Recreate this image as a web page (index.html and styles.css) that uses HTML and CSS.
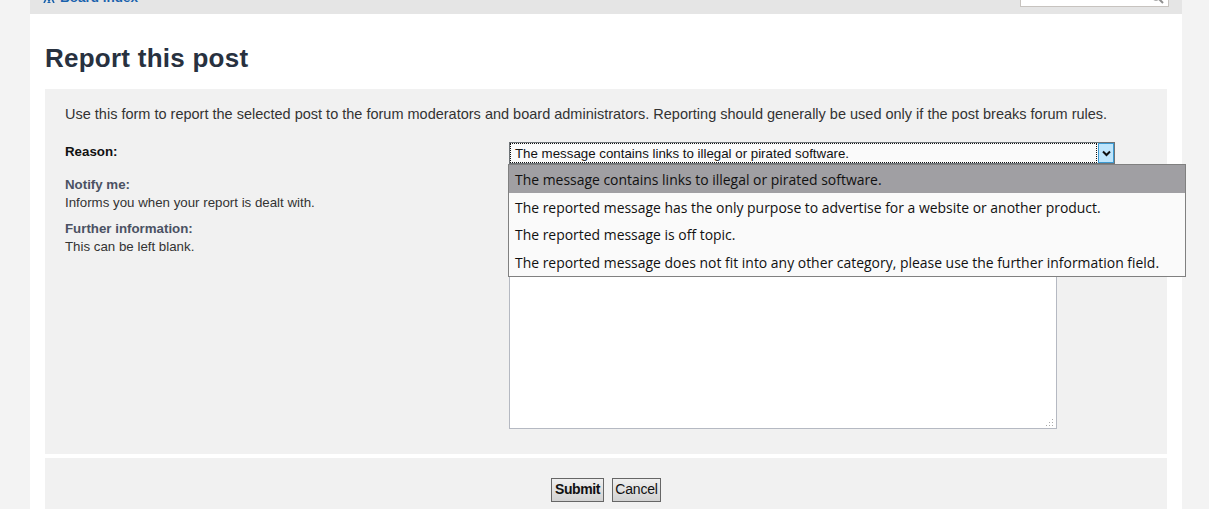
FILE: index.html
```html
<!DOCTYPE html>
<html lang="en">
<head>
  <meta charset="UTF-8">
  <meta name="viewport" content="width=device-width, initial-scale=1.0">
  <link rel="stylesheet" href="styles.css">
  <title>Report this post</title>
</head>
<body>
  <div class="wrap">
    <div class="navbar">
      <a class="board-link" href="#">
        <svg class="home-icon" width="12" height="8" viewBox="0 0 12 8"><path d="M1 8 4 2l3 6M5 8l3-6 3 6" fill="none" stroke="#1a62ad" stroke-width="1.6"/></svg>
        Board index
      </a>
      <div class="search-box">
        <svg class="search-icon" width="14" height="14" viewBox="0 0 14 14"><circle cx="6" cy="6" r="4" fill="none" stroke="#8f8f8f" stroke-width="1.5"/><path d="M9 9l4 4" stroke="#8f8f8f" stroke-width="2"/></svg>
      </div>
    </div>

    <h1>Report this post</h1>

    <div class="panel form-panel">
      <p class="intro">Use this form to report the selected post to the forum moderators and board administrators. Reporting should generally be used only if the post breaks forum rules.</p>
      <div class="form-grid">
        <div class="labels">
          <div class="field-label reason-label">Reason:</div>
          <div class="field-label notify">Notify me:</div>
          <div class="field-help">Informs you when your report is dealt with.</div>
          <div class="field-label further">Further information:</div>
          <div class="field-help">This can be left blank.</div>
        </div>
        <div class="controls">
          <div class="select-box">
            <div class="select-value"><span>The message contains links to illegal or pirated software.</span></div>
            <div class="select-arrow">
              <svg width="9" height="7" viewBox="0 0 9 7"><path d="M1 1.5 4.5 5 8 1.5" fill="none" stroke="#111" stroke-width="2"/></svg>
            </div>
          </div>
          <div class="textarea">
            <svg class="grip" width="9" height="9" viewBox="0 0 9 9"><path d="M7 1h1v1H7zM4 4h1v1H4zM7 4h1v1H7zM1 7h1v1H1zM4 7h1v1H4zM7 7h1v1H7z" fill="#a9a9a9"/></svg>
          </div>
          <ul class="select-list">
            <li class="selected">The message contains links to illegal or pirated software.</li>
            <li>The reported message has the only purpose to advertise for a website or another product.</li>
            <li class="short-row">The reported message is off topic.</li>
            <li>The reported message does not fit into any other category, please use the further information field.</li>
          </ul>
        </div>
      </div>
    </div>

    <div class="panel button-panel">
      <button class="btn btn-main">Submit</button>
      <button class="btn btn-cancel">Cancel</button>
    </div>
  </div>
</body>
</html>
```

FILE: styles.css
```css
html, body {
  height: 100%;
}

body {
  margin: 0;
  overflow: hidden;
  background-color: #f3f3f3;
  color: #333;
  font-family: "Liberation Sans", Arial, sans-serif;
}

.wrap {
  width: 1152px;
  height: 509px;
  margin-left: 30px;
  background-color: #fff;
}

.navbar {
  height: 14px;
  background-color: #e5e5e5;
  display: flex;
  justify-content: space-between;
  align-items: flex-end;
  padding: 0 13px;
}

.board-link {
  display: flex;
  align-items: flex-end;
  gap: 5px;
  margin-bottom: 9px;
  color: #1a62ad;
  font-size: 13.5px;
  line-height: 15px;
  font-weight: bold;
  text-decoration: none;
}

.home-icon {
  margin-bottom: 2px;
}

.search-box {
  position: relative;
  width: 147px;
  height: 20px;
  margin-bottom: 7px;
  background-color: #fff;
  border: 1px solid #c7c3bf;
}

.search-icon {
  position: absolute;
  right: 4px;
  bottom: 2px;
}

h1 {
  margin: 27px 0 14px 15px;
  color: #28313f;
  font-size: 26px;
  line-height: 34px;
  font-weight: bold;
  letter-spacing: 0.25px;
}

.panel {
  margin: 0 15px;
  background-color: #f1f1f1;
}

.form-panel {
  height: 365px;
  padding: 16px 20px 0;
  box-sizing: border-box;
}

.intro {
  margin: 0 0 17px;
  font-size: 14.5px;
  line-height: 18px;
  color: #333;
}

.form-grid {
  display: grid;
  grid-template-columns: 444px 1fr;
}

.field-label {
  font-size: 13.3px;
  line-height: 18px;
  font-weight: bold;
  color: #4b5263;
}

.reason-label {
  margin-top: 3px;
  color: #111;
}

.notify {
  margin-top: 15px;
}

.further {
  margin-top: 8px;
}

.field-help {
  font-size: 13.3px;
  line-height: 18px;
  color: #333;
}

.controls {
  position: relative;
}

.select-box {
  display: flex;
  width: 606px;
  height: 22px;
  box-sizing: border-box;
  margin-top: 2px;
  border: 1px solid #6f7478;
  background-color: #fafafa;
}

.select-value {
  flex: 1;
  padding: 1px;
  font-size: 13.3px;
  line-height: 20px;
  color: #111;
}

.select-value span {
  display: block;
  height: 18px;
  padding-left: 4px;
  outline: 1px dotted #111;
  outline-offset: 0;
  margin-right: 1px;
}

.select-arrow {
  width: 16px;
  display: flex;
  align-items: center;
  justify-content: center;
  background-color: #bfe6fd;
  border: 1px solid #3c9ad2;
  box-sizing: border-box;
}

.textarea {
  position: relative;
  width: 548px;
  height: 261px;
  margin-top: 4px;
  box-sizing: border-box;
  background-color: #fff;
  border: 1px solid #b5b9c2;
}

.grip {
  position: absolute;
  right: 2px;
  bottom: 1px;
}

.select-list {
  position: absolute;
  top: 24px;
  left: -1px;
  width: 678px;
  margin: 0;
  padding: 0;
  list-style: none;
  box-sizing: border-box;
  background-color: #fafafa;
  border: 1px solid #808080;
  font-family: "Open Sans", "Noto Sans", sans-serif;
  font-size: 13.95px;
  color: #111;
}

.select-list li {
  height: 28px;
  line-height: 29px;
  padding-left: 6px;
  white-space: nowrap;
}

.select-list .short-row {
  height: 27px;
  line-height: 28px;
}

.select-list .selected {
  background-color: #a09fa3;
}

.button-panel {
  height: 60px;
  margin-top: 4px;
  padding-top: 20px;
  box-sizing: border-box;
  padding-left: 506px;
  display: flex;
  align-items: flex-start;
  gap: 8px;
}

.btn {
  height: 24px;
  padding: 0 0 2px;
  border: 1px solid #666;
  background: linear-gradient(#efefef, #d2d2d2);
  font-family: "Liberation Sans", Arial, sans-serif;
  font-size: 14px;
  letter-spacing: -0.2px;
  color: #111;
}

.btn-main {
  width: 53px;
  font-weight: bold;
  letter-spacing: -0.4px;
}

.btn-cancel {
  width: 49px;
}
```
